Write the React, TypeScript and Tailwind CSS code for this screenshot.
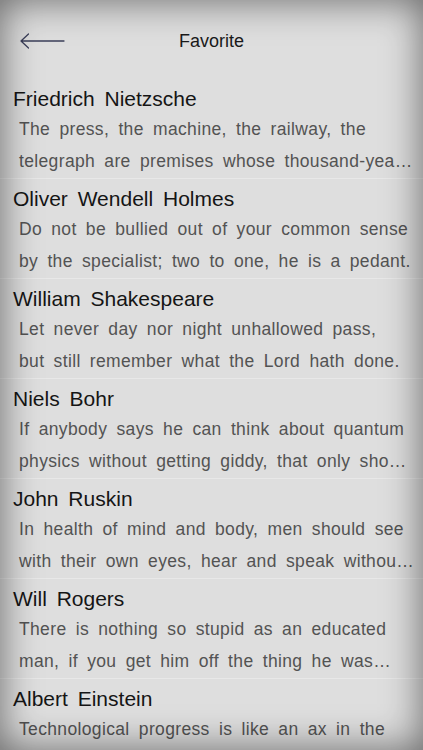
import React from "react";

type Quote = { author: string; text: string };

const quotes: Quote[] = [
  {
    author: "Friedrich Nietzsche",
    text: "The press, the machine, the railway, the telegraph are premises whose thousand-year conclusion no one has yet dared to draw.",
  },
  {
    author: "Oliver Wendell Holmes",
    text: "Do not be bullied out of your common sense by the specialist; two to one, he is a pedant.",
  },
  {
    author: "William Shakespeare",
    text: "Let never day nor night unhallowed pass,\nbut still remember what the Lord hath done.",
  },
  {
    author: "Niels Bohr",
    text: "If anybody says he can think about quantum physics without getting giddy, that only shows he has not understood the first thing about it.",
  },
  {
    author: "John Ruskin",
    text: "In health of mind and body, men should see with their own eyes, hear and speak without fear.",
  },
  {
    author: "Will Rogers",
    text: "There is nothing so stupid as an educated man, if you get him off the thing he was educated in.",
  },
  {
    author: "Albert Einstein",
    text: "Technological progress is like an ax in the hands of a pathological criminal.",
  },
];

function BackArrow() {
  return (
    <svg width="46" height="18" viewBox="0 0 46 18" fill="none">
      <path
        d="M2 9 H45 M2 9 L9.5 2 M2 9 L9.5 16"
        stroke="#3b3f5a"
        strokeWidth="1.3"
        strokeLinecap="round"
      />
    </svg>
  );
}

export default function App() {
  return (
    <div className="relative h-[750px] w-full overflow-hidden bg-[#dedede] font-['Liberation_Sans',Arial,sans-serif]">
      <header className="flex h-[82px] items-center px-[19px]">
        <button className="flex w-[60px] items-center">
          <BackArrow />
        </button>
        <h1 className="flex-1 text-center text-[18px] text-[#1a1a1a]">Favorite</h1>
        <div className="w-[60px]" />
      </header>

      <ul>
        {quotes.map((q, i) => (
          <li
            key={q.author}
            className={
              i === 0
                ? "pl-[13px] pr-[7px] pt-[3px] pb-[1px]"
                : "border-t border-[#e8e8e8] pl-[13px] pr-[7px] pt-[6px] pb-[1px]"
            }
          >
            <div className="text-[21px] leading-[28px] text-[#151515] [word-spacing:4px]">
              {q.author}
            </div>
            <p className="line-clamp-2 whitespace-pre-line pl-[6px] text-[17.5px] leading-[32px] tracking-[0.35px] text-[#535353] [word-spacing:4px]">
              {q.text}
            </p>
          </li>
        ))}
      </ul>

      <div className="pointer-events-none absolute inset-0 shadow-[inset_0_0_38px_rgba(0,0,0,0.55)]" />
    </div>
  );
}
